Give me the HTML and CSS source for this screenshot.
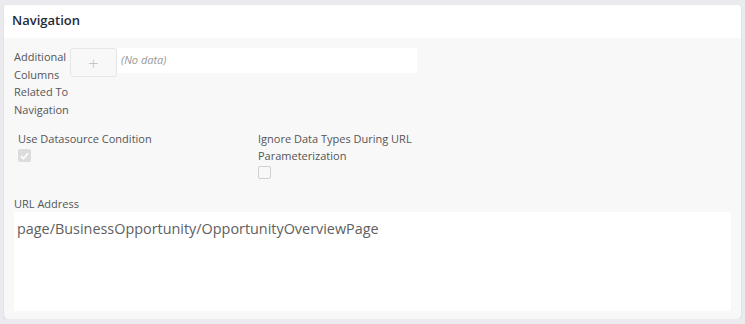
FILE: index.html
```html
<!DOCTYPE html>
<html lang="en">
<head>
    <meta charset="UTF-8" />
    <meta name="viewport" content="width=device-width, initial-scale=1.0">
    <title>Navigation</title>
    <link rel="stylesheet" href="styles.css">
</head>
<body>

<div class="panel">
    <!-- Header -->
    <div class="panel-head">Navigation</div>

    <div class="panel-body">
        <!-- Additional columns -->
        <div class="row-columns">
            <div class="label-columns">Additional Columns Related To Navigation</div>
            <button class="add-btn" type="button">+</button>
            <div class="no-data">(No data)</div>
        </div>

        <!-- Checkboxes -->
        <div class="row-checks">
            <div class="check-field">
                <div class="check-label">Use Datasource Condition</div>
                <span class="check checked">
                    <svg width="9" height="8" viewBox="0 0 9 8"><path d="M1 4.2 L3.4 6.5 L8 1.3" fill="none" stroke="#fff" stroke-width="1.6"/></svg>
                </span>
            </div>
            <div class="check-field">
                <div class="check-label">Ignore Data Types During URL Parameterization</div>
                <span class="check"></span>
            </div>
        </div>

        <!-- URL -->
        <div class="url-label">URL Address</div>
        <div class="url-box">page/BusinessOpportunity/OpportunityOverviewPage</div>
    </div>
</div>

</body>
</html>
```

FILE: styles.css
```css
* {
    margin: 0;
    padding: 0;
    box-sizing: border-box;
}

body {
    font-family: 'Open Sans', sans-serif;
    background: #ebeaee;
    padding: 5px 4px 0 4px;
    color: #555;
}

.panel {
    background: #f8f8f8;
    border-radius: 4px;
    overflow: hidden;
    height: 314px;
    box-shadow: 0 1px 2px rgba(0,0,0,0.12);
}

.panel-head {
    background: #fff;
    height: 33px;
    padding: 6px 8px 0 8px;
    font-size: 13px;
    font-weight: 600;
    color: #1f2a3a;
}

.panel-body {
    padding: 10px 10px 8px 10px;
}

/* Additional columns row */
.row-columns {
    display: flex;
    align-items: flex-start;
}

.label-columns {
    width: 56px;
    font-size: 11px;
    line-height: 17.5px;
    color: #555;
}

.add-btn {
    width: 47px;
    height: 29px;
    background: #f8f8f8;
    border: 1px solid #e6e6e6;
    border-radius: 3px;
    color: #c4c4c4;
    font-family: 'Open Sans', sans-serif;
    font-size: 18px;
    font-weight: 300;
    line-height: 24px;
}

.no-data {
    width: 300px;
    height: 25px;
    background: #fff;
    font-size: 11px;
    font-style: italic;
    color: #999;
    padding: 4px 4px 0 4px;
}

/* Checkbox row */
.row-checks {
    display: flex;
    padding-left: 4px;
    margin-top: 12px;
}

.check-field {
    width: 240px;
    height: 65px;
}

.check-field + .check-field {
    width: 170px;
}

.check-label {
    font-size: 11px;
    line-height: 17px;
    margin-bottom: 2px;
}

.check {
    display: flex;
    align-items: center;
    justify-content: center;
    width: 13px;
    height: 13px;
    border: 1px solid #cfcfcf;
    border-radius: 2px;
    background: #f8f8f8;
}

.check.checked {
    background: #dcdcdc;
    border-color: #dcdcdc;
}

/* URL */
.url-label {
    font-size: 11px;
    line-height: 17px;
}

.url-box {
    background: #fff;
    height: 99px;
    padding: 7px 3px;
    font-size: 14.4px;
    color: #606060;
}
```
